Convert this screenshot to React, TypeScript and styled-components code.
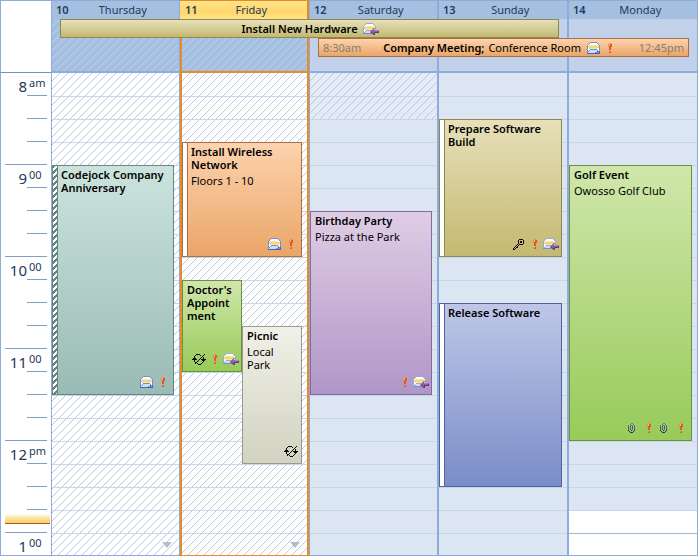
import React from "react";
import styled, { createGlobalStyle, css } from "styled-components";

const GlobalStyle = createGlobalStyle`
  * { box-sizing: border-box; }
  body {
    margin: 0;
    background: #ffffff;
    font-family: "Noto Sans", "Segoe UI", sans-serif;
    font-size: 11px;
    line-height: 13px;
    color: #000000;
  }
`;

/* ---------- palette ---------- */

const LINE = "#8dacd9";
const ORANGE = "#e98b25";
const INK = "#1e395b";

type Tone = "teal" | "orange" | "green" | "cream" | "purple" | "khaki" | "blue";

const tones: Record<Tone, { edge: string; top: string; bottom: string }> = {
  teal: { edge: "#66857e", top: "#cbe3dd", bottom: "#9abbb4" },
  orange: { edge: "#a8713f", top: "#fdd3ae", bottom: "#eaa568" },
  green: { edge: "#6a9142", top: "#d0e6ab", bottom: "#98cb59" },
  cream: { edge: "#999b8a", top: "#f1f0e8", bottom: "#d2d3c2" },
  purple: { edge: "#86699f", top: "#dfcde5", bottom: "#b096c7" },
  khaki: { edge: "#8e8850", top: "#e7e0ba", bottom: "#c3b971" },
  blue: { edge: "#52639b", top: "#bec7e7", bottom: "#7a8dc8" },
};

const hatch = (color: string) => css`
  background-image: linear-gradient(135deg, transparent 47%, ${color} 47%, ${color} 53%, transparent 53%);
  background-size: 8px 8px;
`;

/* ---------- icons ---------- */

type IconKind = "mail" | "reply" | "alert" | "repeat" | "key" | "clip";

const pixels: Record<IconKind, { x: number; y: number; rows: string[] }> = {
  mail: {
    x: 2,
    y: 2,
    rows: [
      "...bbbbbbb...",
      "..bwwwwwwwb..",
      ".bwwwwwwwwwb.",
      "bwyyyyyyyyywb",
      "bYYYYYYYYYYYb",
      "bpYYYYYYYYYpb",
      "bwpyyyyyyypwb",
      "bwwbbbbbbbwwb",
      "bwbpppppppbwb",
      "bbppppppppqbd",
      "bpppppppbbbbd",
      "ddddddddddddd",
    ],
  },
  reply: {
    x: 1,
    y: 2,
    rows: [
      "...ggggggg......",
      "..gwwwwwwwg.....",
      ".gwwwwwwwwwg....",
      "gwyyyyyyyyywg...",
      "gYYYYYYYYYYYg...",
      "gpYYYYYYYYvvg...",
      "gwpyyyyyyvVpg...",
      "gwwgggggvVVvvvvv",
      "gwgppppvVVVVVVVu",
      "ggpppppvuVVuuuuu",
      "bbbbbbbbbuVu....",
      "..........uu....",
    ],
  },
  alert: {
    x: 7,
    y: 3,
    rows: [".oo.", "oOrr", "oOrr", "orrr", ".rr.", ".rr.", ".rr.", "....", ".or.", ".rr."],
  },
  repeat: {
    x: 2,
    y: 3,
    rows: [
      "....####....#.",
      "...#....#..#..",
      "..#.......#...",
      "..#......#.#..",
      ".###....#..#..",
      "#####..#.#####",
      "..#...#...###.",
      "..#..#.....#..",
      "...##.....#...",
      "...#.#...#....",
      "......###.....",
    ],
  },
  key: {
    x: 3,
    y: 3,
    rows: [
      "......####.",
      ".....#....#",
      ".....#.##.#",
      ".....#.##.#",
      ".....#....#",
      "....#.####.",
      "...#.#.....",
      "..#.#......",
      ".#.##......",
      "#.#........",
      "##.........",
    ],
  },
  clip: {
    x: 4,
    y: 3,
    rows: ["...tt..", "..t..t.", "t.ttt.t", "q.q.q.q", "q.q.q.q", "q.q.q.q", "q.q.q.q", "n..n..n", ".n...n.", "..nnn.."],
  },
};

const inks: Record<string, string> = {
  b: "#6f8fd0",
  w: "#ffffff",
  y: "#fbe6a0",
  Y: "#f7d678",
  p: "#cfddf6",
  d: "#4565b4",
  g: "#9aabd0",
  v: "#a77fb8",
  V: "#8d5fa3",
  u: "#5f3a78",
  o: "#f08a55",
  O: "#fbb088",
  r: "#e05a22",
  "#": "#0c0c0c",
  t: "#4f8f8c",
  q: "#5d5692",
  n: "#2f2a5c",
};

const labels: Record<IconKind, string> = {
  mail: "Message",
  reply: "Replied",
  alert: "Important",
  repeat: "Recurring",
  key: "Private",
  clip: "Attachment",
};

const IconSvg = styled.svg`
  display: block;
  flex: none;
  width: 16px;
  height: 16px;
  overflow: visible;
`;

function Icon({ kind }: { kind: IconKind }) {
  const { x, y, rows } = pixels[kind];
  return (
    <IconSvg viewBox="0 0 16 16" shapeRendering="crispEdges" role="img" aria-label={labels[kind]}>
      {rows.flatMap((row, r) =>
        row
          .split("")
          .map((ch, c) =>
            ch === "." ? null : <rect key={`${r}-${c}`} x={x + c} y={y + r} width="1" height="1" fill={inks[ch]} />
          )
      )}
    </IconSvg>
  );
}

/* ---------- calendar frame ---------- */

const Calendar = styled.main`
  display: grid;
  grid-template-columns: 51px repeat(3, 129fr) repeat(2, 130fr);
  grid-template-rows: 19px 19px 19px 16px auto;
  width: 100%;
`;

const Corner = styled.div`
  grid-column: 1;
  grid-row: 1 / 5;
  border: 1px solid ${LINE};
  border-right: 0;
  border-bottom-color: #6f94c4;
`;

const edges = css<{ $today?: boolean; $last?: boolean }>`
  border: 0 solid ${(p) => (p.$today ? ORANGE : LINE)};
  border-left-width: ${(p) => (p.$today ? 2 : 1)}px;
  border-right-width: ${(p) => (p.$today ? 2 : 1)}px;
`;

const DayHead = styled.header<{ $col: number; $today?: boolean }>`
  ${edges}
  grid-column: ${(p) => p.$col};
  grid-row: 1;
  display: flex;
  align-items: center;
  padding: 0 2px 2px 4px;
  border-top-width: 1px;
  background: #a5bfe1;
  color: ${INK};
  ${(p) =>
    p.$today &&
    css`
      border-left-width: 0;
      padding-left: 5px;
      background: linear-gradient(#ffe48c, #ffd86f 50%, #ffd669 60%, #ffe68a);
    `}
`;

const Strong = styled.strong`
  font-weight: 600;
`;

const DayName = styled.span`
  flex: 1;
  text-align: center;
`;

const AllDayCell = styled.div<{ $col: number; $today?: boolean; $hatched?: boolean }>`
  ${edges}
  grid-column: ${(p) => p.$col};
  grid-row: 2 / 5;
  border-bottom-width: 2px;
  background-color: ${(p) => (p.$hatched ? "#a5bfe1" : "#c1d1ea")};
  ${(p) => p.$hatched && hatch("#c0d2ec")}
`;

const Bar = styled.article<{ $tone: Tone; $from: number; $to: number; $lane: number }>`
  grid-column: ${(p) => p.$from} / ${(p) => p.$to};
  grid-row: ${(p) => p.$lane};
  display: flex;
  align-items: center;
  margin: 0 9px;
  padding: 0 4px;
  border: 1px solid ${(p) => tones[p.$tone].edge};
  background: linear-gradient(${(p) => tones[p.$tone].top}, ${(p) => tones[p.$tone].bottom});
  white-space: nowrap;
`;

const BarText = styled.div`
  flex: 1;
  display: flex;
  align-items: center;
  justify-content: center;
  gap: 4px;
`;

const IconRun = styled.span`
  display: flex;
`;

const BarTime = styled.time`
  color: #857f76;
`;

/* ---------- time ruler ---------- */

const Ruler = styled.div`
  grid-column: 1;
  grid-row: 5;
  display: grid;
  grid-template-columns: 26px 1fr;
  grid-template-rows: repeat(20, 23px) 22px;
  border-left: 1px solid ${LINE};
  border-bottom: 1px solid ${LINE};
  color: ${INK};
`;

const Tick = styled.div<{ $row: number; $hour: boolean }>`
  grid-column: 1 / 3;
  grid-row: ${(p) => p.$row};
  margin-left: ${(p) => (p.$hour ? 4 : 26)}px;
  margin-right: 4px;
  border-bottom: 1px solid #7f9fc6;
`;

const HourText = styled.div<{ $row: number }>`
  grid-column: 1;
  grid-row: ${(p) => p.$row};
  padding-top: 5px;
  font-size: 15px;
  line-height: 17px;
  text-align: right;
`;

const MinuteText = styled.div<{ $row: number }>`
  grid-column: 2;
  grid-row: ${(p) => p.$row};
  padding: 3px 0 0 2px;
`;

const NowMarker = styled.div`
  grid-column: 1 / 3;
  grid-row: 20;
  margin: 4px 1px 0 4px;
  height: 10px;
  border-bottom: 1px solid #a85a1c;
  background: linear-gradient(#fffdf2, #fde6a8 40%, #f9cd62);
`;

/* ---------- day columns ---------- */

const DayColumn = styled.section<{ $col: number; $today?: boolean; $hatched?: boolean }>`
  ${edges}
  grid-column: ${(p) => p.$col};
  grid-row: 5;
  display: grid;
  grid-template-columns: 1fr 1fr 5px;
  grid-template-rows: repeat(20, 23px) 22px;
  border-bottom-width: 1px;
  background-color: ${(p) => (p.$hatched ? "#ffffff" : "#dce6f2")};
  ${(p) => p.$hatched && hatch("#b9c6dd")}
`;

const HatchedHours = styled.div`
  grid-column: 1 / 4;
  grid-row: 1 / 3;
  background-color: #e4eaf6;
  ${hatch("#b9c8e3")}
`;

const Slot = styled.div<{ $row: number; $open?: boolean }>`
  grid-column: 1 / 4;
  grid-row: ${(p) => p.$row};
  border-top: ${(p) => (p.$row > 1 ? 1 : 0)}px solid ${(p) => (p.$open && p.$row > 20 ? "#9cb8dd" : "#c5d7ee")};
  background: ${(p) => (p.$open ? "#ffffff" : "transparent")};
`;

const Card = styled.article<{ $tone: Tone; $start: number; $end: number; $half?: 1 | 2 }>`
  grid-row: ${(p) => p.$start} / ${(p) => p.$end};
  grid-column: ${(p) => (p.$half ? `${p.$half} / ${p.$half + 1}` : "1 / 3")};
  display: flex;
  min-width: 0;
  border: 1px solid ${(p) => tones[p.$tone].edge};
  background: linear-gradient(${(p) => tones[p.$tone].top}, ${(p) => tones[p.$tone].bottom});
`;

const Strip = styled.div<{ $tone: Tone; $striped: boolean }>`
  flex: none;
  width: 5px;
  border-right: 1px solid ${(p) => tones[p.$tone].edge};
  background-color: #ffffff;
  ${(p) =>
    p.$striped &&
    css`
      background-image: linear-gradient(
        135deg,
        ${tones[p.$tone].edge} 25%,
        #ffffff 25%,
        #ffffff 50%,
        ${tones[p.$tone].edge} 50%,
        ${tones[p.$tone].edge} 75%,
        #ffffff 75%
      );
      background-size: 6px 6px;
    `}
`;

const CardBody = styled.div<{ $beside: boolean }>`
  flex: 1;
  min-width: 0;
  display: flex;
  flex-direction: column;
  padding: 2px 3px 4px ${(p) => (p.$beside ? 3 : 4)}px;
`;

const CardTitle = styled.h3`
  margin: 0;
  font-size: 11px;
  line-height: 13px;
  font-weight: 600;
  overflow-wrap: break-word;
`;

const CardPlace = styled.p<{ $narrow?: boolean }>`
  margin: 3px 0 0;
  max-width: ${(p) => (p.$narrow ? "40px" : "none")};
`;

const CardIcons = styled.div`
  display: flex;
  justify-content: flex-end;
  margin-top: auto;
`;

const MoreButton = styled.button`
  grid-column: 1 / 3;
  grid-row: 21;
  justify-self: end;
  align-self: start;
  margin: 9px 2px 0 0;
  padding: 0;
  border: 0;
  background: none;
  line-height: 0;
`;

/* ---------- data ---------- */

interface Appointment {
  title: string;
  place?: string;
  tone: Tone;
  start: number;
  end: number;
  half?: 1 | 2;
  strip?: "plain" | "striped";
  icons?: IconKind[];
}

interface Day {
  number: number;
  name: string;
  today?: boolean;
  hatched?: boolean;
  hatchedStart?: boolean;
  openFrom?: number;
  more?: boolean;
  items: Appointment[];
}

const days: Day[] = [
  {
    number: 10,
    name: "Thursday",
    hatched: true,
    more: true,
    items: [
      { title: "Codejock Company Anniversary", tone: "teal", start: 5, end: 15, strip: "striped", icons: ["mail", "alert"] },
    ],
  },
  {
    number: 11,
    name: "Friday",
    today: true,
    hatched: true,
    more: true,
    items: [
      { title: "Install Wireless Network", place: "Floors 1 - 10", tone: "orange", start: 4, end: 9, strip: "plain", icons: ["mail", "alert"] },
      { title: "Doctor's Appointment", tone: "green", start: 10, end: 14, half: 1, icons: ["repeat", "alert", "reply"] },
      { title: "Picnic", place: "Local Park", tone: "cream", start: 12, end: 18, half: 2, icons: ["repeat"] },
    ],
  },
  {
    number: 12,
    name: "Saturday",
    hatchedStart: true,
    items: [
      { title: "Birthday Party", place: "Pizza at the Park", tone: "purple", start: 7, end: 15, icons: ["alert", "reply"] },
    ],
  },
  {
    number: 13,
    name: "Sunday",
    items: [
      { title: "Prepare Software Build", tone: "khaki", start: 3, end: 9, strip: "plain", icons: ["key", "alert", "reply"] },
      { title: "Release Software", tone: "blue", start: 11, end: 19, strip: "plain" },
    ],
  },
  {
    number: 14,
    name: "Monday",
    openFrom: 20,
    items: [
      { title: "Golf Event", place: "Owosso Golf Club", tone: "green", start: 5, end: 17, icons: ["clip", "alert", "clip", "alert"] },
    ],
  },
];

const hours: [string, string][] = [
  ["8", "am"],
  ["9", "00"],
  ["10", "00"],
  ["11", "00"],
  ["12", "pm"],
  ["1", "00"],
];

const slots = Array.from({ length: 21 }, (_, i) => i + 1);

function AppointmentCard({ item }: { item: Appointment }) {
  return (
    <Card $tone={item.tone} $start={item.start} $end={item.end} $half={item.half}>
      {item.strip && <Strip $tone={item.tone} $striped={item.strip === "striped"} />}
      <CardBody $beside={item.strip !== undefined}>
        <CardTitle>{item.title}</CardTitle>
        {item.place && <CardPlace $narrow={item.half !== undefined}>{item.place}</CardPlace>}
        {item.icons && (
          <CardIcons>
            {item.icons.map((kind, i) => (
              <Icon key={i} kind={kind} />
            ))}
          </CardIcons>
        )}
      </CardBody>
    </Card>
  );
}

export default function App() {
  return (
    <>
      <GlobalStyle />
      <Calendar>
        <Corner />
        {days.map((d, i) => (
          <DayHead key={d.number} $col={i + 2} $today={d.today}>
            <Strong>{d.number}</Strong>
            <DayName>{d.name}</DayName>
          </DayHead>
        ))}
        {days.map((d, i) => (
          <AllDayCell key={d.number} $col={i + 2} $today={d.today} $hatched={d.hatched} />
        ))}
        <Bar $tone="khaki" $from={2} $to={6} $lane={2}>
          <BarText>
            <Strong>Install New Hardware</Strong>
            <IconRun>
              <Icon kind="reply" />
            </IconRun>
          </BarText>
        </Bar>
        <Bar $tone="orange" $from={4} $to={7} $lane={3}>
          <BarTime>8:30am</BarTime>
          <BarText>
            <Strong>Company Meeting;</Strong>
            <span>Conference Room</span>
            <IconRun>
              <Icon kind="mail" />
              <Icon kind="alert" />
            </IconRun>
          </BarText>
          <BarTime>12:45pm</BarTime>
        </Bar>

        <Ruler>
          {slots.slice(0, 20).map((n) => (
            <Tick key={n} $row={n} $hour={n % 4 === 0} />
          ))}
          {hours.map(([h, m], i) => (
            <React.Fragment key={h}>
              <HourText $row={i * 4 + 1}>{h}</HourText>
              <MinuteText $row={i * 4 + 1}>{m}</MinuteText>
            </React.Fragment>
          ))}
          <NowMarker />
        </Ruler>

        {days.map((d, i) => (
          <DayColumn key={d.number} $col={i + 2} $today={d.today} $hatched={d.hatched} aria-label={d.name}>
            {d.hatchedStart && <HatchedHours />}
            {slots.map((n) => (
              <Slot key={n} $row={n} $open={d.openFrom !== undefined && n >= d.openFrom} />
            ))}
            {d.items.map((item) => (
              <AppointmentCard key={item.title} item={item} />
            ))}
            {d.more && (
              <MoreButton type="button" aria-label={`More on ${d.name}`}>
                <svg width="10" height="6" viewBox="0 0 10 6" aria-hidden="true">
                  <path d="M0 0H10L5 6Z" fill="#b4bccb" />
                </svg>
              </MoreButton>
            )}
          </DayColumn>
        ))}
      </Calendar>
    </>
  );
}
